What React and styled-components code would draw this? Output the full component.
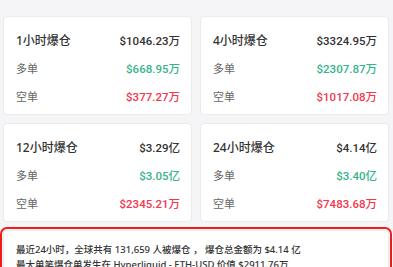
import React from 'react'
import styled, { createGlobalStyle } from 'styled-components'

const GlobalStyle = createGlobalStyle`
  body {
    margin: 0;
    background: #f5f5f7;
    font-family: "Noto Sans", "Noto Sans CJK SC", sans-serif;
  }
`

const Page = styled.div`
  padding: 16px 4px 0 3px;
`

const Grid = styled.div`
  display: grid;
  grid-template-columns: 1fr 1fr;
  gap: 8px;
`

const Card = styled.div`
  background: #fff;
  border: 1px solid #ebebeb;
  border-radius: 4px;
  padding: 9px 11px 4px 12px;
  height: 99px;
  box-sizing: border-box;
`

const Row = styled.div`
  display: flex;
  justify-content: space-between;
  align-items: center;
  height: 28px;
  font-size: ${(p) => (p.$head ? '12px' : '11px')};
  font-weight: ${(p) => (p.$head ? 500 : 400)};
  color: ${(p) => (p.$head ? '#333' : '#666')};
`

const Value = styled.span`
  font-family: Roboto, "Noto Sans CJK SC", sans-serif;
  font-size: 11.5px;
  font-weight: 500;
  color: ${(p) => (p.$tone === 'up' ? '#36b58d' : p.$tone === 'down' ? '#f5364f' : '#333')};
`

const Summary = styled.div`
  margin-top: 8px;
  background: #fff;
  border: 1px solid #ebebeb;
  border-radius: 4px;
  outline: 2px solid #f21b1b;
  outline-offset: 1px;
  padding: 11px 12px;
  font-size: 9.5px;
  font-weight: 500;
  line-height: 15px;
  color: #333;
`

const stats = [
  { title: '1小时爆仓', total: '$1046.23万', long: '$668.95万', short: '$377.27万' },
  { title: '4小时爆仓', total: '$3324.95万', long: '$2307.87万', short: '$1017.08万' },
  { title: '12小时爆仓', total: '$3.29亿', long: '$3.05亿', short: '$2345.21万' },
  { title: '24小时爆仓', total: '$4.14亿', long: '$3.40亿', short: '$7483.68万' },
]

export default function App() {
  return (
    <>
      <GlobalStyle />
      <Page>
        <Grid>
          {stats.map((s) => (
            <Card key={s.title}>
              <Row $head>
                <span>{s.title}</span>
                <Value>{s.total}</Value>
              </Row>
              <Row>
                <span>多单</span>
                <Value $tone="up">{s.long}</Value>
              </Row>
              <Row>
                <span>空单</span>
                <Value $tone="down">{s.short}</Value>
              </Row>
            </Card>
          ))}
        </Grid>
        <Summary>
          最近24小时，全球共有 131,659 人被爆仓 ， 爆仓总金额为 $4.14 亿
          <br />
          最大单笔爆仓单发生在 Hyperliquid - ETH-USD 价值 $2911.76万
        </Summary>
      </Page>
    </>
  )
}
